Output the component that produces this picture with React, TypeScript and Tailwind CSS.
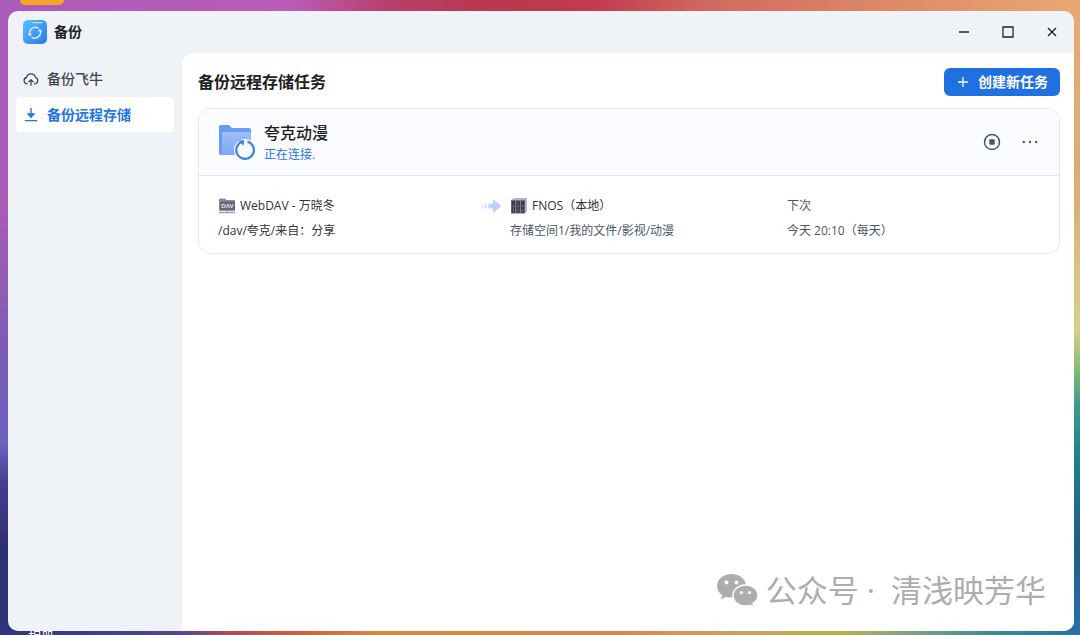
import type { ReactNode } from "react";

const wallpaper =
  "[background:linear-gradient(90deg,#a95cb8_0%,#bb5cb8_27%,#b83f6c_36%,#b93850_45%,#c03c4c_55%,#cf6860_65%,#dc8567_80%,#e9a873_100%)_0_0/100%_11px_no-repeat,linear-gradient(90deg,#30347a_0%,#40408c_10%,#5a4592_17%,#b0485a_21%,#c8603c_27%,#dc8440_35%,#dc8848_58%,#d0a058_68%,#b9b04e_78%,#7fa580_84%,#3a8a98_92%,#2773a5_100%)_0_100%/100%_4px_no-repeat,linear-gradient(180deg,#a95cb8_0%,#a95cb4_33%,#7d5cb4_55%,#6c62bd_70%,#483c90_76%,#2f2f74_86%,#30347a_100%)_0_0/20px_100%_no-repeat,linear-gradient(180deg,#e9a873_0%,#dcab78_30%,#dac184_42%,#d6cf8a_52%,#86bd70_58%,#3c9a8a_64%,#1f7f8c_72%,#215c88_86%,#2773a5_100%)_100%_0/20px_100%_no-repeat]";

function AppLogo() {
  return (
    <svg viewBox="0 0 24 24" className="size-6" aria-hidden="true">
      <defs>
        <linearGradient id="logo" x1="0" y1="0" x2="1" y2="1">
          <stop offset="0" stopColor="#5cc0fb" />
          <stop offset="1" stopColor="#2a78ee" />
        </linearGradient>
      </defs>
      <rect width="24" height="24" rx="5" fill="url(#logo)" />
      <path d="M10 2.600h9" stroke="#b9e0ff" strokeWidth="1.200" strokeLinecap="round" />
      <g fill="none" stroke="#d5ecff" strokeWidth="1.500" strokeLinecap="round">
        <path d="M7 15A5.700 5.700 0 0 1 15 8" />
        <path d="M17 10.200A5.700 5.700 0 0 1 9 17.400" />
        <path d="M5.600 14.200 7 15.300l1.300-1.300M15.600 11 17 9.800l1.300 1.300" strokeWidth="1.100" />
      </g>
    </svg>
  );
}

function CloudUp() {
  return (
    <svg viewBox="0 0 16 16" className="size-4" fill="none" stroke="currentColor" strokeWidth="1.300" strokeLinecap="round" strokeLinejoin="round" aria-hidden="true">
      <path d="M4.300 12.800A3.200 3.200 0 0 1 3.500 6.500a4.600 4.600 0 0 1 9-.1 3.300 3.300 0 0 1-.8 6.400" />
      <path d="M8 14.300V9M5.900 10.700 8 8.600l2.100 2.100" />
    </svg>
  );
}

function DownloadIcon() {
  return (
    <svg viewBox="0 0 16 16" className="size-4" fill="none" stroke="currentColor" strokeWidth="1.400" aria-hidden="true">
      <path d="M8 1.500V8M2.200 13.600h11.600" strokeLinecap="round" />
      <path d="M4.200 6.600h7.600L8 10.900Z" fill="currentColor" strokeWidth=".6" />
    </svg>
  );
}

function TaskFolder() {
  return (
    <svg viewBox="0 0 38 38" className="size-[38px]" aria-hidden="true">
      <defs>
        <linearGradient id="folder" x1="0" y1="0" x2="0" y2="1">
          <stop offset="0" stopColor="#9dbdfa" />
          <stop offset="1" stopColor="#7fa9f6" />
        </linearGradient>
      </defs>
      <path d="M1 3.500Q1 2 2.500 2H11l3 3h17q2 0 2 2v25H3q-2 0-2-2Z" fill="#6a9bf2" />
      <path d="M4 10.500Q4 9 5.500 9H33v21q0 2-2 2H3q1-1 1-3Z" fill="url(#folder)" />
      <circle cx="27" cy="27" r="11" fill="#fafcff" />
      <path d="M23.800 18.900A8.800 8.800 0 1 0 29.500 18.600" fill="none" stroke="#3d80e0" strokeWidth="2.200" />
      <path d="M20.500 17.500 26.300 17.300 25.600 22.800Z" fill="#3d80e0" />
    </svg>
  );
}

function DavIcon() {
  return (
    <svg viewBox="0 0 18 16" className="h-4 w-[18px]" aria-hidden="true">
      <path d="M1 1.500Q1 .5 2 .5h5L8.500 2H16q1 0 1 1v9.500H1Z" fill="#8a8a9c" />
      <rect x="2" y="3.500" width="15" height="9" rx="1" fill="#666678" />
      <path d="M1 14.500h16M9 12.500v3" stroke="#a2a2b2" strokeWidth="1.300" />
      <text x="9.300" y="10.300" textAnchor="middle" fontSize="6" fontWeight="700" fontFamily="Liberation Sans, sans-serif" fill="#e4e4ec">DAV</text>
    </svg>
  );
}

function NasIcon() {
  return (
    <svg viewBox="0 0 18 16" className="h-4 w-[18px]" aria-hidden="true">
      <path d="M1 2 4 0h13v13l-2 2.500H1Z" fill="#b4b5c4" />
      <path d="M1 2h14v13.500H1Z" fill="#85869a" />
      <path d="M1.500 2.800h3.700v12H1.500ZM6.200 2.800h3.700v12H6.200ZM10.900 2.800h3.700v12h-3.700Z" fill="#3c3d4e" />
      <path d="M3.400 7.500v1.300M8 7.500v1.300M12.700 7.500v1.300M3.400 11.500v1.300M8 11.500v1.300M12.700 11.500v1.300" stroke="#9c9db0" />
    </svg>
  );
}

function FlowArrow() {
  return (
    <svg viewBox="0 0 22 14" className="h-3.5 w-[22px]" aria-hidden="true">
      <path d="M1 5h2v4H1Z" fill="#eef2ff" />
      <path d="M4 4.500h3v5H4Z" fill="#e0e9ff" />
      <path d="M8 4.500h2v5H8Z" fill="#cfddff" />
      <path d="M10 4.500h3V1.500Q13 .3 14 1l6.500 5q1 1 0 2L14 13q-1 .7-1-.5V9.500h-3Z" fill="#bccfff" />
    </svg>
  );
}

function WeChat() {
  return (
    <svg viewBox="0 0 42 34" className="h-[34px] w-[42px]" aria-hidden="true">
      <path d="M15.500 1C7.300 1 1 6.300 1 13c0 3.800 2 7 5.300 9.200L5 26.500l5-2.700c1.700.5 3.500.8 5.500.8 8 0 14.500-5.200 14.500-11.800S23.500 1 15.500 1Z" fill="#adadad" />
      <path d="M29.500 12C22.500 12 17 16.500 17 22.500S22.500 33 29.500 33c1.600 0 3-.2 4.400-.6l4.100 1.600-1-3.600c3-1.900 5-4.700 5-7.900C42 16.500 36.500 12 29.500 12Z" fill="#adadad" stroke="#fff" strokeWidth="1.500" />
      <g fill="#fff">
        <circle cx="10.500" cy="9.500" r="2" />
        <circle cx="20.500" cy="9.500" r="2" />
        <circle cx="25.300" cy="19.500" r="1.600" />
        <circle cx="33.500" cy="19.500" r="1.600" />
      </g>
    </svg>
  );
}

function NavItem({ icon, label, active = false }: { icon: ReactNode; label: string; active?: boolean }) {
  return (
    <a
      href="#"
      aria-current={active ? "page" : undefined}
      className={
        active
          ? "flex h-[35px] items-center gap-2 rounded bg-white px-[7px] text-sm font-bold text-[#2475e0]"
          : "flex h-[35px] items-center gap-2 rounded px-[7px] text-sm font-medium text-[#40444c]"
      }
    >
      {icon}
      {label}
    </a>
  );
}

export default function App() {
  return (
    <div
      className={
        "relative flex min-h-screen flex-col overflow-hidden pt-[11px] pr-1.5 pb-1 pl-2 font-['Open_Sans','Noto_Sans_CJK_SC',sans-serif] " +
        wallpaper
      }
    >
      <div className="absolute top-0 left-5 h-[5px] w-11 rounded-b-lg bg-[#f9a52b]" />
      <div className="absolute -bottom-2 left-7 text-[13px] leading-[14px] text-white">相册</div>

      <main className="relative flex flex-1 flex-col overflow-hidden rounded-[10px] bg-[#eff3f8]">
        <header className="flex h-[42px] items-center justify-between pr-4 pl-[15px]">
          <div className="flex items-center gap-[7px] text-sm font-bold text-[#1d2025]">
            <AppLogo />
            备份
          </div>
          <div className="flex items-center gap-8 text-[#222]">
            <button type="button" aria-label="最小化" className="size-3">
              <svg viewBox="0 0 12 12" stroke="currentColor" strokeWidth="1.400"><path d="M1 6h10" /></svg>
            </button>
            <button type="button" aria-label="最大化" className="size-3">
              <svg viewBox="0 0 12 12" fill="none" stroke="currentColor" strokeWidth="1.300"><path d="M1 1h10v10H1Z" /></svg>
            </button>
            <button type="button" aria-label="关闭" className="size-3">
              <svg viewBox="0 0 12 12" stroke="currentColor" strokeWidth="1.400"><path d="m2 2 8 8M10 2l-8 8" /></svg>
            </button>
          </div>
        </header>

        <div className="flex flex-1">
          <nav className="flex w-[174px] shrink-0 flex-col gap-px px-2 pt-2">
            <NavItem icon={<CloudUp />} label="备份飞牛" />
            <NavItem icon={<DownloadIcon />} label="备份远程存储" active />
          </nav>

          <section className="flex-1 rounded-tl-xl bg-white pt-[15px] pr-3.5 pl-4">
            <div className="flex h-7 items-center justify-between">
              <h1 className="text-base font-bold text-[#1d2025]">备份远程存储任务</h1>
              <button type="button" className="flex h-7 items-center gap-2 rounded-md bg-[#1f70e0] px-3 text-sm font-bold text-white">
                <svg viewBox="0 0 14 14" className="size-3.5" stroke="currentColor" strokeWidth="1.300" aria-hidden="true">
                  <path d="M7 2v10M2 7h10" />
                </svg>
                创建新任务
              </button>
            </div>

            <article className="mt-3 overflow-hidden rounded-xl border border-[#e4e8ee]">
              <div className="flex h-[67px] items-center border-b border-[#e4e8ee] bg-[#fafcff] pr-5 pl-[19px]">
                <TaskFolder />
                <div className="ml-2 flex-1 pt-0.5">
                  <h2 className="text-base leading-6 font-medium text-[#1d2025]">夸克动漫</h2>
                  <p className="text-xs leading-5 text-[#2475e0]">正在连接.</p>
                </div>
                <div className="flex items-center gap-5 text-[#4b5568]">
                  <button type="button" aria-label="停止" className="size-[18px]">
                    <svg viewBox="0 0 18 18" fill="none">
                      <circle cx="9" cy="9" r="7.500" stroke="currentColor" strokeWidth="1.500" />
                      <rect x="6.300" y="6.300" width="5.400" height="5.400" rx=".6" fill="currentColor" />
                    </svg>
                  </button>
                  <button type="button" aria-label="更多" className="size-[18px]">
                    <svg viewBox="0 0 18 18" fill="currentColor">
                      <circle cx="2.800" cy="9" r="1.200" />
                      <circle cx="9" cy="9" r="1.200" />
                      <circle cx="15.200" cy="9" r="1.200" />
                    </svg>
                  </button>
                </div>
              </div>

              <div className="grid grid-cols-[262px_30px_277px_1fr] px-[19px] pt-[17px] pb-[10px] text-xs text-[#30343b]">
                <div>
                  <div className="flex h-[25px] items-center gap-1">
                    <DavIcon />
                    WebDAV - 万晓冬
                  </div>
                  <p className="leading-[25px]">/dav/夸克/来自：分享</p>
                </div>
                <div className="flex h-[25px] items-center">
                  <FlowArrow />
                </div>
                <div>
                  <div className="flex h-[25px] items-center gap-1">
                    <NasIcon />
                    FNOS（本地）
                  </div>
                  <p className="leading-[25px] text-[#4b5568]">存储空间1/我的文件/影视/动漫</p>
                </div>
                <div className="leading-[25px] text-[#4b5568]">
                  <p>下次</p>
                  <p>今天 20:10（每天）</p>
                </div>
              </div>
            </article>
          </section>
        </div>

        <div className="absolute right-7 bottom-[18px] flex items-center gap-2 text-[31px] leading-[46px] text-[#adadad]">
          <WeChat />
          <span className="font-['Open_Sans','Noto_Sans_CJK_SC',sans-serif]">
            公众号<span className="px-2">·</span> 清浅映芳华
          </span>
        </div>
      </main>
    </div>
  );
}
